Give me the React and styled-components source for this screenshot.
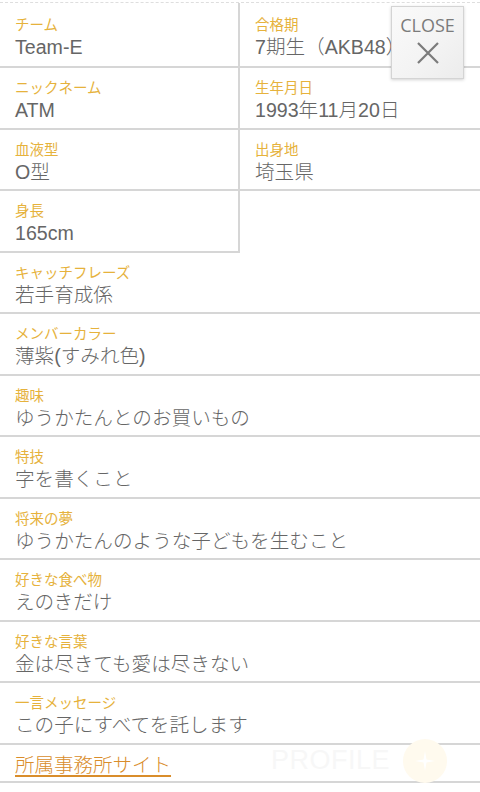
import React from "react";
import styled, { createGlobalStyle } from "styled-components";

const Global = createGlobalStyle`
  html, body { margin: 0; padding: 0; background: #ffffff; }
  body { font-family: "Liberation Sans", "Noto Sans CJK JP", sans-serif; }
  * { box-sizing: border-box; }
`;

const Page = styled.div`
  position: relative;
  width: 480px;
  padding-top: 2px;
  background: #fff;
`;

const Grid = styled.div`
  display: grid;
  grid-template-columns: 240px 240px;
  border-top: 1px dashed #dedede;
`;

const Cell = styled.div`
  height: ${(p) => (p.$first ? "65px" : "61.5px")};
  padding: ${(p) => (p.$first ? "11px" : "9px")} 0 0 15px;
  border-bottom: 2px solid #d6d6d6;
  border-right: ${(p) => (p.$left ? "2px solid #d6d6d6" : "none")};
  overflow: hidden;
  white-space: nowrap;
`;

const Empty = styled.div``;

const Row = styled.div`
  height: 61.5px;
  padding: 9px 0 0 15px;
  border-bottom: 2px solid #d6d6d6;
`;

const Label = styled.div`
  font-family: "Noto Sans CJK JP", sans-serif;
  font-size: 14.5px;
  line-height: 20px;
  color: #e6b23c;
`;

const Value = styled.div`
  font-family: "Liberation Sans", "Noto Sans CJK JP", sans-serif;
  font-size: 19.6px;
  font-weight: 300;
  line-height: 27px;
  color: #666666;
`;

const LinkRow = styled.div`
  position: relative;
  height: 38.5px;
  padding: 6px 0 0 15px;
  border-bottom: 2px solid #d6d6d6;
`;

const SiteLink = styled.a`
  font-family: "Noto Sans CJK JP", sans-serif;
  font-size: 19.5px;
  font-weight: 300;
  line-height: 26px;
  color: #d98d2b;
  text-decoration: underline;
  text-decoration-thickness: 1.5px;
  text-underline-offset: 3px;
`;

const Watermark = styled.div`
  position: absolute;
  right: 33px;
  top: -6px;
  display: flex;
  align-items: center;
  gap: 13px;
  pointer-events: none;
`;

const WatermarkText = styled.span`
  font-family: "Liberation Sans", sans-serif;
  font-size: 27px;
  font-weight: 400;
  color: #f7f7f7;
  letter-spacing: 0.5px;
`;

const WatermarkBadge = styled.div`
  width: 44px;
  height: 44px;
  border-radius: 50%;
  background: #fffaee;
  display: flex;
  align-items: center;
  justify-content: center;
`;

const CloseButton = styled.button`
  position: absolute;
  top: 6px;
  right: 16px;
  width: 73px;
  height: 73px;
  padding: 8px 0 0;
  border: 1px solid #d4d4d4;
  background: linear-gradient(135deg, #fafafa 0%, #f3f3f3 60%, #ececec 100%);
  box-shadow: 0 1px 3px rgba(0, 0, 0, 0.18);
  display: flex;
  flex-direction: column;
  align-items: center;
  gap: 6px;
  cursor: pointer;
`;

const CloseText = styled.span`
  font-family: "Open Sans", sans-serif;
  font-size: 18px;
  line-height: 20px;
  color: #7b7b7b;
`;

const top = [
  { l: "チーム", v: "Team-E" },
  { l: "合格期", v: "7期生（AKB48）" },
  { l: "ニックネーム", v: "ATM" },
  { l: "生年月日", v: "1993年11月20日" },
  { l: "血液型", v: "O型" },
  { l: "出身地", v: "埼玉県" },
  { l: "身長", v: "165cm" },
];

const rows = [
  { l: "キャッチフレーズ", v: "若手育成係" },
  { l: "メンバーカラー", v: "薄紫(すみれ色)" },
  { l: "趣味", v: "ゆうかたんとのお買いもの" },
  { l: "特技", v: "字を書くこと" },
  { l: "将来の夢", v: "ゆうかたんのような子どもを生むこと" },
  { l: "好きな食べ物", v: "えのきだけ" },
  { l: "好きな言葉", v: "金は尽きても愛は尽きない" },
  { l: "一言メッセージ", v: "この子にすべてを託します" },
];

export default function App() {
  return (
    <Page>
      <Global />
      <Grid>
        {top.map((c, i) => (
          <Cell key={c.l} $left={i % 2 === 0} $first={i < 2}>
            <Label>{c.l}</Label>
            <Value>{c.v}</Value>
          </Cell>
        ))}
        <Empty />
      </Grid>
      {rows.map((r) => (
        <Row key={r.l}>
          <Label>{r.l}</Label>
          <Value>{r.v}</Value>
        </Row>
      ))}
      <LinkRow>
        <SiteLink href="#">所属事務所サイト</SiteLink>
        <Watermark>
          <WatermarkText>PROFILE</WatermarkText>
          <WatermarkBadge>
            <svg width="22" height="22" viewBox="0 0 22 22">
              <path d="M11 1 L12.5 9.5 L21 11 L12.5 12.5 L11 21 L9.5 12.5 L1 11 L9.5 9.5 Z" fill="#ffffff" />
            </svg>
          </WatermarkBadge>
        </Watermark>
      </LinkRow>
      <CloseButton type="button">
        <CloseText>CLOSE</CloseText>
        <svg width="24" height="24" viewBox="0 0 24 24">
          <path d="M2 2 L22 22 M22 2 L2 22" stroke="#7b7b7b" strokeWidth="2.2" fill="none" />
        </svg>
      </CloseButton>
    </Page>
  );
}
